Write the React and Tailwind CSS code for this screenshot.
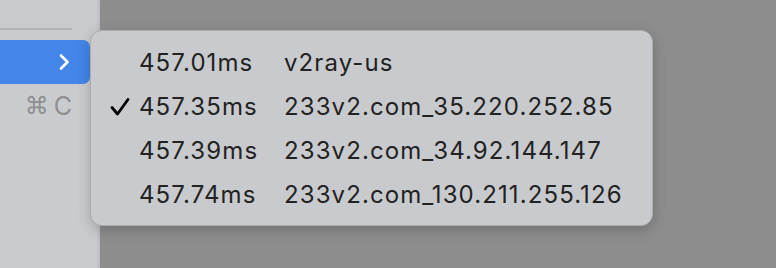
const rows = [
  { ms: '457.01ms', name: 'v2ray-us', checked: false },
  { ms: '457.35ms', name: '233v2.com_35.220.252.85', checked: true },
  { ms: '457.39ms', name: '233v2.com_34.92.144.147', checked: false },
  { ms: '457.74ms', name: '233v2.com_130.211.255.126', checked: false },
];

function Check() {
  return (
    <svg width="22" height="22" viewBox="0 0 22 22" className="text-black">
      <path d="M3 11.5 L8.5 18 L19 3.5" fill="none" stroke="currentColor" strokeWidth="2.8" strokeLinecap="round" strokeLinejoin="round" />
    </svg>
  );
}

export default function App() {
  return (
    <div
      className="relative flex h-[268px] w-[776px] overflow-hidden bg-[#8d8d8d]"
      style={{ fontFamily: 'Inter, "Liberation Sans", sans-serif' }}
    >
      <aside className="flex w-[100px] shrink-0 flex-col bg-[#cacbce] shadow-[inset_-4px_0_4px_-3px_rgba(0,0,0,0.12)]">
        <div className="mt-[28px] h-[2px] w-[72px] bg-[#b3b4b6]" />
        <div className="mt-[10px] flex h-[44px] w-[90px] items-center justify-end rounded-r-[7px] bg-[#4385e8] pr-[20px]">
          <svg width="12" height="18" viewBox="0 0 12 18">
            <path d="M3 2.5 L9.5 9 L3 15.5" fill="none" stroke="white" strokeWidth="2.6" strokeLinecap="round" strokeLinejoin="round" />
          </svg>
        </div>
        <div className="mt-[10px] flex h-[24px] w-[72px] items-center justify-end gap-[5px] text-[#8e8f91]">
          <span className="text-[24px] leading-none" style={{ fontFamily: '"DejaVu Sans", sans-serif' }}>⌘</span>
          <span className="text-[25px] leading-none">C</span>
        </div>
      </aside>

      <div className="absolute left-[90px] top-[30px] h-[196px] w-[563px] rounded-[12px] border border-[#abacaf] bg-[#c9cacd] pb-[8px] pt-[10px] shadow-[0_4px_14px_rgba(0,0,0,0.2)]">
        {rows.map((row) => (
          <div key={row.ms} className="flex h-[44px] items-center text-[24px] leading-none tracking-[1.1px] text-[#222222]">
            <div className="flex w-[48px] justify-end pr-[8px]">{row.checked && <Check />}</div>
            <span className="w-[145px]">{row.ms}</span>
            <span>{row.name}</span>
          </div>
        ))}
      </div>
    </div>
  );
}
